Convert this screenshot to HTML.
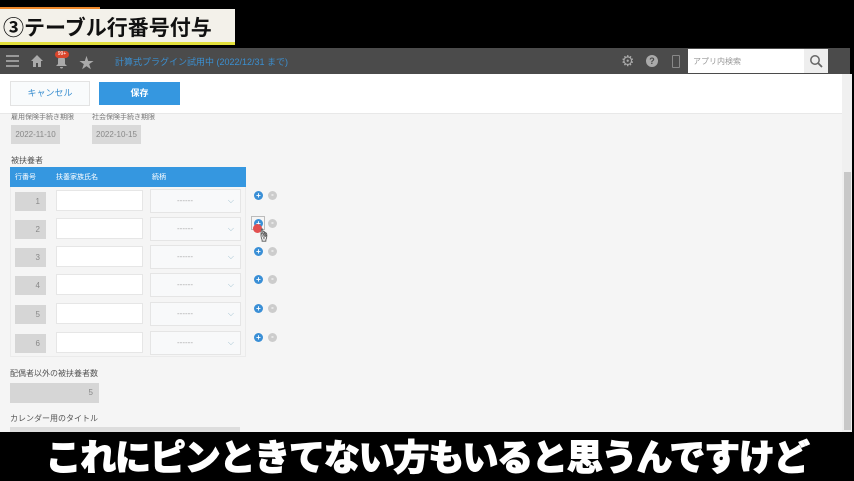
<!DOCTYPE html>
<html><head><meta charset="utf-8"><style>
*{margin:0;padding:0;box-sizing:border-box}
body{width:854px;height:480px;background:#000;position:relative;overflow:hidden;font-family:"Liberation Sans","Noto Sans CJK JP",sans-serif}
.a{position:absolute}
.t{font-size:8px;color:#555}
.num{background:#d6d6d6;color:#888;font-size:8px;text-align:right;padding-right:6px;line-height:19px}
.in{background:#fff;border:1px solid #e6e6e6}
.sel{background:#f8f9fa;border:1px solid #e5e5e5;color:#aaa;font-size:8px;line-height:22px;padding-left:26px}
.circ{width:9px;height:9px;border-radius:50%}
.p{background:#3a8fd6;color:#fff;font-size:8px;line-height:9px;text-align:center;font-weight:bold}
.m{background:#ccc;color:#fff;font-size:8px;line-height:8px;text-align:center;font-weight:bold}
</style></head><body>
<div class="a" style="left:0;top:7px;width:100px;height:2px;background:#f08a2c"></div>
<div class="a" style="left:0;top:9px;width:235px;height:36px;background:#f3f1ea;border-bottom:3px solid #e3e03c"></div>
<div class="a" style="left:3px;top:11px;font-size:21px;font-weight:bold;color:#111;line-height:32px;font-family:'Noto Sans CJK JP',sans-serif">③テーブル行番号付与</div>

<div class="a" style="left:0;top:48px;width:850px;height:384px;background:#f5f5f5"></div>
<div class="a" style="left:0;top:48px;width:850px;height:26px;background:#4b4b4b"></div>
<div class="a" style="left:6px;top:55px;width:13px;height:2px;background:#999;box-shadow:0 5px 0 #999,0 10px 0 #999"></div>
<svg class="a" style="left:30px;top:54px" width="14" height="14" viewBox="0 0 14 14"><path d="M7 1L1 7h2v6h3V9h2v4h3V7h2z" fill="#aaa"/></svg>
<svg class="a" style="left:55px;top:55px" width="13" height="14" viewBox="0 0 13 14"><path d="M6.5 1C4 1 3 3 3 5v4L1 11h11L10 9V5C10 3 9 1 6.5 1zM5 12h3a1.5 1.5 0 0 1-3 0z" fill="#aaa"/></svg>
<div class="a" style="left:55px;top:51px;width:14px;height:7px;background:#d9452b;border-radius:4px;font-size:5px;color:#fff;text-align:center;line-height:7px">99+</div>
<div class="a" style="left:79px;top:52px;font-size:15px;color:#aaa">★</div>
<div class="a" style="left:115px;top:55px;font-size:9px;color:#3b8fd0">計算式プラグイン試用中 (2022/12/31 まで)</div>
<div class="a" style="left:621px;top:52px;font-size:15px;color:#aaa">⚙</div>
<div class="a" style="left:646px;top:55px;width:12px;height:12px;border-radius:50%;background:#aaa;color:#4b4b4b;font-size:9px;font-weight:bold;text-align:center;line-height:12px">?</div>
<div class="a" style="left:672px;top:55px;width:8px;height:13px;border:1.5px solid #888;border-radius:1px"></div>
<div class="a" style="left:688px;top:49px;width:116px;height:24px;background:#fff"></div>
<div class="a" style="left:693px;top:56px;font-size:8px;color:#999">アプリ内検索</div>
<div class="a" style="left:804px;top:49px;width:24px;height:24px;background:#eee"></div>
<svg class="a" style="left:809px;top:54px" width="14" height="14" viewBox="0 0 14 14"><circle cx="6" cy="6" r="4.2" stroke="#666" stroke-width="1.5" fill="none"/><path d="M9 9l4 4" stroke="#666" stroke-width="1.8"/></svg>

<div class="a" style="left:0;top:74px;width:842px;height:40px;background:#fff;border-bottom:1px solid #e8e8e8"></div>
<div class="a" style="left:10px;top:81px;width:80px;height:25px;border:1px solid #e3e3e3;background:#f9fbfc;color:#3b8fd0;font-size:9px;text-align:center;line-height:23px">キャンセル</div>
<div class="a" style="left:99px;top:82px;width:81px;height:23px;background:#3597e0;color:#fff;font-size:9px;text-align:center;line-height:23px;font-weight:bold">保存</div>

<div class="a t" style="left:11px;top:112px;font-size:7px;color:#777">雇用保険手続き期限</div>
<div class="a t" style="left:92px;top:112px;font-size:7px;color:#777">社会保険手続き期限</div>
<div class="a" style="left:11px;top:125px;width:49px;height:19px;background:#d9d9d9;color:#888;font-size:8px;text-align:center;line-height:19px">2022-11-10</div>
<div class="a" style="left:92px;top:125px;width:49px;height:19px;background:#d9d9d9;color:#888;font-size:8px;text-align:center;line-height:19px">2022-10-15</div>

<div class="a t" style="left:11px;top:155px">被扶養者</div>
<div class="a" style="left:10px;top:167px;width:236px;height:20px;background:#3597e0"></div>
<div class="a" style="left:15px;top:172px;font-size:7px;color:#fff">行番号</div>
<div class="a" style="left:56px;top:172px;font-size:7px;color:#fff">扶養家族氏名</div>
<div class="a" style="left:152px;top:172px;font-size:7px;color:#fff">続柄</div>
<div class="a" style="left:10px;top:187px;width:236px;height:170px;border:1px solid #ebebeb;border-top:none"></div>

<div class="a num" style="left:15px;top:192px;width:31px;height:19px">1</div>
<div class="a in" style="left:56px;top:190px;width:87px;height:21px"></div>
<div class="a sel" style="left:150px;top:189px;width:91px;height:24px">------<span style="position:absolute;right:6px;color:#9bc">⌵</span></div>
<div class="a num" style="left:15px;top:220px;width:31px;height:19px">2</div>
<div class="a in" style="left:56px;top:218px;width:87px;height:21px"></div>
<div class="a sel" style="left:150px;top:217px;width:91px;height:24px">------<span style="position:absolute;right:6px;color:#9bc">⌵</span></div>
<div class="a num" style="left:15px;top:248px;width:31px;height:19px">3</div>
<div class="a in" style="left:56px;top:246px;width:87px;height:21px"></div>
<div class="a sel" style="left:150px;top:245px;width:91px;height:24px">------<span style="position:absolute;right:6px;color:#9bc">⌵</span></div>
<div class="a num" style="left:15px;top:276px;width:31px;height:19px">4</div>
<div class="a in" style="left:56px;top:274px;width:87px;height:21px"></div>
<div class="a sel" style="left:150px;top:273px;width:91px;height:24px">------<span style="position:absolute;right:6px;color:#9bc">⌵</span></div>
<div class="a num" style="left:15px;top:305px;width:31px;height:19px">5</div>
<div class="a in" style="left:56px;top:303px;width:87px;height:21px"></div>
<div class="a sel" style="left:150px;top:302px;width:91px;height:24px">------<span style="position:absolute;right:6px;color:#9bc">⌵</span></div>
<div class="a num" style="left:15px;top:334px;width:31px;height:19px">6</div>
<div class="a in" style="left:56px;top:332px;width:87px;height:21px"></div>
<div class="a sel" style="left:150px;top:331px;width:91px;height:24px">------<span style="position:absolute;right:6px;color:#9bc">⌵</span></div>

<div class="a circ p" style="left:254px;top:191px">+</div><div class="a circ m" style="left:268px;top:191px">-</div>
<div class="a" style="left:251px;top:216px;width:14px;height:14px;border:1px solid #bbb"></div>
<div class="a circ p" style="left:254px;top:219px">+</div><div class="a circ m" style="left:268px;top:219px">-</div>
<div class="a circ" style="left:253px;top:224px;background:#e25050"></div>
<div class="a" style="left:257px;top:225px;font-size:13px;color:#ddd;-webkit-text-stroke:0.5px #555">☝</div>
<div class="a circ p" style="left:254px;top:247px">+</div><div class="a circ m" style="left:268px;top:247px">-</div>
<div class="a circ p" style="left:254px;top:275px">+</div><div class="a circ m" style="left:268px;top:275px">-</div>
<div class="a circ p" style="left:254px;top:304px">+</div><div class="a circ m" style="left:268px;top:304px">-</div>
<div class="a circ p" style="left:254px;top:333px">+</div><div class="a circ m" style="left:268px;top:333px">-</div>

<div class="a t" style="left:10px;top:368px">配偶者以外の被扶養者数</div>
<div class="a num" style="left:10px;top:383px;width:89px;height:20px;line-height:20px">5</div>
<div class="a t" style="left:10px;top:413px">カレンダー用のタイトル</div>
<div class="a" style="left:10px;top:427px;width:230px;height:5px;background:#ddd"></div>

<div class="a" style="left:842px;top:74px;width:10px;height:358px;background:#f0f0f0"></div>
<div class="a" style="left:844px;top:172px;width:7px;height:258px;background:#c8c8c8"></div>

<div class="a" style="left:0;top:432px;width:854px;text-align:center;font-size:36px;font-weight:900;color:#fff;line-height:46px;font-family:'Noto Sans CJK JP',sans-serif;-webkit-text-stroke:1px #fff;letter-spacing:-1.2px">これにピンときてない方もいると思うんですけど</div>
</body></html>
